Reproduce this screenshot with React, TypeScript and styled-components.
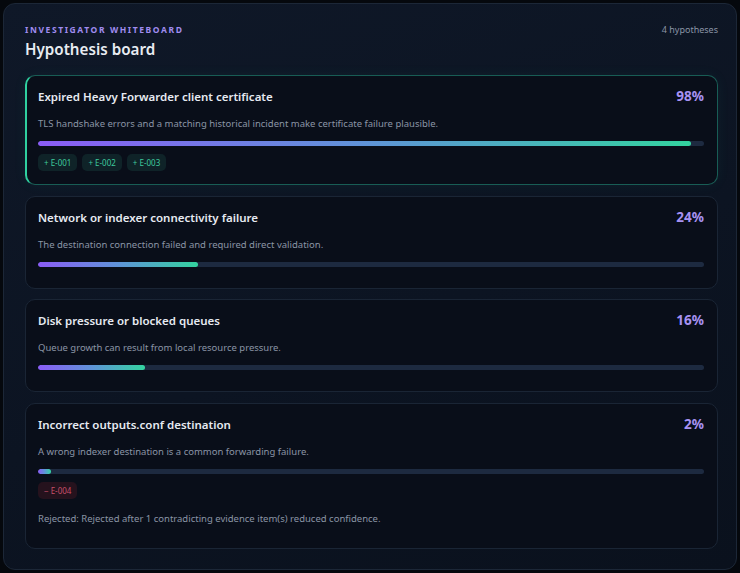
import styled, { createGlobalStyle } from "styled-components";

const GlobalStyle = createGlobalStyle`
    html, body {
        margin: 0;
        background: #05080d;
    }
    body {
        padding: 3px;
        font-family: "Noto Sans", "Open Sans", sans-serif;
        color: #e5e9f0;
    }
    * {
        box-sizing: border-box;
    }
`;

const Board = styled.section`
    border: 1px solid #1c2737;
    border-radius: 12px;
    background: linear-gradient(160deg, #0f1828 0%, #0c1422 55%, #0a111d 100%);
    padding: 19px 18px 20px 21px;
`;

const Header = styled.header`
    display: flex;
    justify-content: space-between;
    align-items: flex-start;
    margin-bottom: 15px;
`;

const Eyebrow = styled.div`
    font-size: 8.5px;
    font-weight: 700;
    letter-spacing: 1.6px;
    text-transform: uppercase;
    color: #a08cf0;
    line-height: 14px;
`;

const Title = styled.h1`
    margin: 1px 0 0;
    font-size: 15.2px;
    font-weight: 600;
    line-height: 22px;
    color: #e8ecf2;
`;

const Count = styled.span`
    font-size: 9px;
    line-height: 14px;
    color: #8a94a6;
`;

const List = styled.div`
    display: flex;
    flex-direction: column;
    gap: 10.5px;
`;

const Card = styled.article<{ $active?: boolean }>`
    border: 1px solid ${p => (p.$active ? "rgba(45, 190, 160, 0.45)" : "#1a2535")};
    border-left: ${p => (p.$active ? "2px solid #2fd0a0" : "1px solid #1a2535")};
    border-radius: 10px;
    background: #090e19;
    padding: 12px 13px 13px ${p => (p.$active ? "11px" : "12px")};
    box-shadow: ${p => (p.$active ? "0 0 14px rgba(45, 200, 160, 0.06)" : "none")};
`;

const TitleRow = styled.div`
    display: flex;
    justify-content: space-between;
    align-items: center;
`;

const CardTitle = styled.h2`
    margin: 0;
    font-size: 11.5px;
    font-weight: 600;
    line-height: 17px;
    color: #e6eaf1;
`;

const Percent = styled.span`
    font-size: 13.5px;
    font-weight: 700;
    color: #a792f2;
    line-height: 17px;
`;

const Description = styled.p`
    margin: 12px 0 0;
    font-size: 9.5px;
    line-height: 14px;
    color: #8b95a6;
`;

const Track = styled.div`
    height: 5px;
    border-radius: 3px;
    background: #1d2a40;
    margin: 10px 0 8px;
    overflow: hidden;
`;

const Fill = styled.div`
    height: 100%;
    border-radius: 3px;
    background: linear-gradient(90deg, #8b5cf6 0%, #5f93d8 50%, #33d39f 100%);
`;

const Chips = styled.div`
    display: flex;
    gap: 5px;
    margin-top: 3px;
`;

const Chip = styled.span<{ $tone: "support" | "contradict" }>`
    display: inline-flex;
    align-items: center;
    height: 17px;
    padding: 0 6px;
    border-radius: 5px;
    font-size: 8px;
    background: ${p => (p.$tone === "support" ? "#0f2328" : "#25121d")};
    color: ${p => (p.$tone === "support" ? "#3ec99d" : "#c8506a")};
`;

const Note = styled.p`
    margin: 13px 0 9px;
    font-size: 9.5px;
    line-height: 14px;
    color: #8b95a6;
`;

type Hypothesis = {
    title: string;
    description: string;
    confidence: number;
    support: string[];
    contradict: string[];
    note?: string;
};

const hypotheses: Hypothesis[] = [
    {
        title: "Expired Heavy Forwarder client certificate",
        description: "TLS handshake errors and a matching historical incident make certificate failure plausible.",
        confidence: 98,
        support: ["E-001", "E-002", "E-003"],
        contradict: [],
    },
    {
        title: "Network or indexer connectivity failure",
        description: "The destination connection failed and required direct validation.",
        confidence: 24,
        support: [],
        contradict: [],
    },
    {
        title: "Disk pressure or blocked queues",
        description: "Queue growth can result from local resource pressure.",
        confidence: 16,
        support: [],
        contradict: [],
    },
    {
        title: "Incorrect outputs.conf destination",
        description: "A wrong indexer destination is a common forwarding failure.",
        confidence: 2,
        support: [],
        contradict: ["E-004"],
        note: "Rejected: Rejected after 1 contradicting evidence item(s) reduced confidence.",
    },
];

function App() {
    const top = Math.max(...hypotheses.map(h => h.confidence));
    return (
        <>
            <GlobalStyle />
            <Board>
                <Header>
                    <div>
                        <Eyebrow>Investigator whiteboard</Eyebrow>
                        <Title>Hypothesis board</Title>
                    </div>
                    <Count>{hypotheses.length} hypotheses</Count>
                </Header>
                <List>
                    {hypotheses.map(h => (
                        <Card key={h.title} $active={h.confidence === top}>
                            <TitleRow>
                                <CardTitle>{h.title}</CardTitle>
                                <Percent>{h.confidence}%</Percent>
                            </TitleRow>
                            <Description>{h.description}</Description>
                            <Track>
                                <Fill style={{ width: `${h.confidence}%` }} />
                            </Track>
                            {(h.support.length > 0 || h.contradict.length > 0) && (
                                <Chips>
                                    {h.support.map(id => (
                                        <Chip key={id} $tone="support">+ {id}</Chip>
                                    ))}
                                    {h.contradict.map(id => (
                                        <Chip key={id} $tone="contradict">− {id}</Chip>
                                    ))}
                                </Chips>
                            )}
                            {h.note && <Note>{h.note}</Note>}
                        </Card>
                    ))}
                </List>
            </Board>
        </>
    );
}

export default App;
